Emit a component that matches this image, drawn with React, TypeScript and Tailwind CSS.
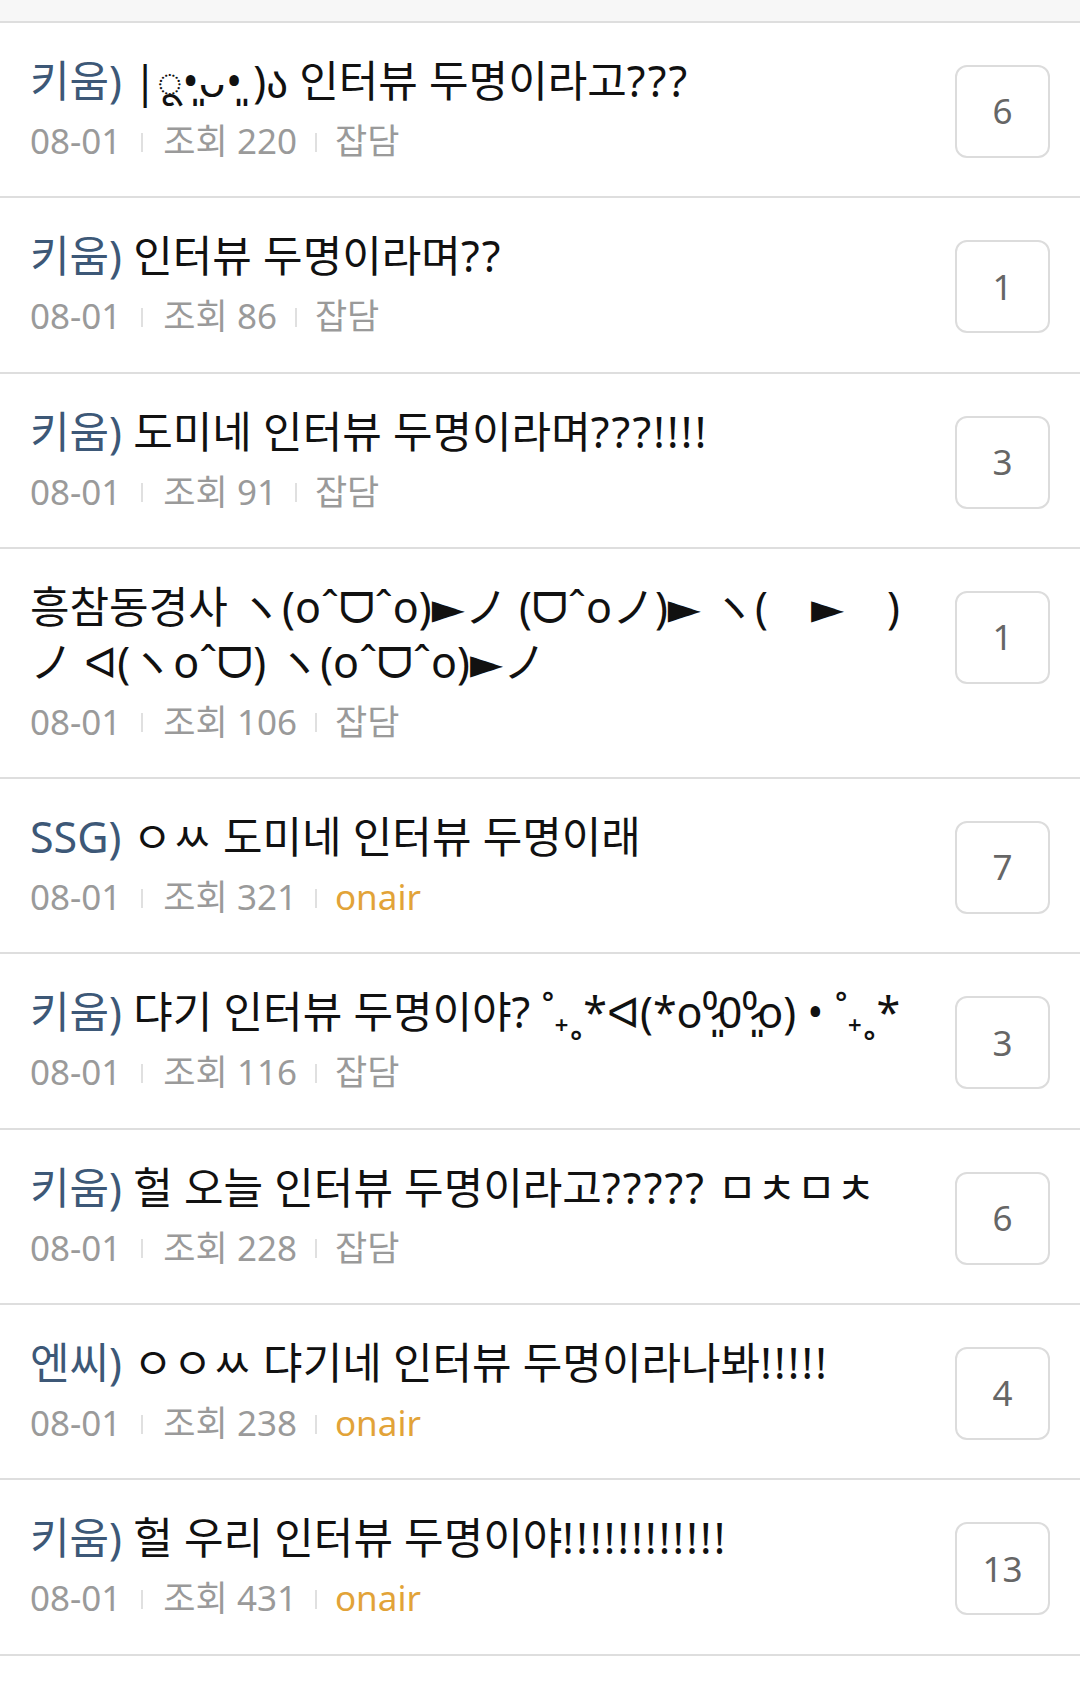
import React from 'react';

type Post = {
  team?: string;
  title: string;
  views: number;
  category: string;
  comments: number;
};

const posts: Post[] = [
  { team: '키움)', title: '|ू•͈ᴗ•͈ )ა 인터뷰 두명이라고???', views: 220, category: '잡담', comments: 6 },
  { team: '키움)', title: '인터뷰 두명이라며??', views: 86, category: '잡담', comments: 1 },
  { team: '키움)', title: '도미네 인터뷰 두명이라며???!!!!', views: 91, category: '잡담', comments: 3 },
  {
    title: '흥참동경사 ヽ(oˆᗜˆo)►ノ (ᗜˆoノ)► ヽ(\u3000►\u3000) ノ ᐊ(ヽoˆᗜ) ヽ(oˆᗜˆo)►ノ',
    views: 106,
    category: '잡담',
    comments: 1,
  },
  { team: 'SSG)', title: 'ㅇㅆ 도미네 인터뷰 두명이래', views: 321, category: 'onair', comments: 7 },
  { team: '키움)', title: '댜기 인터뷰 두명이야? ˚₊˳*ᐊ(*o⁰̷͈0⁰̷͈o) • ˚₊˳*', views: 116, category: '잡담', comments: 3 },
  { team: '키움)', title: '헐 오늘 인터뷰 두명이라고????? ㅁㅊㅁㅊ', views: 228, category: '잡담', comments: 6 },
  { team: '엔씨)', title: 'ㅇㅇㅆ 댜기네 인터뷰 두명이라나봐!!!!!', views: 238, category: 'onair', comments: 4 },
  { team: '키움)', title: '헐 우리 인터뷰 두명이야!!!!!!!!!!!!', views: 431, category: 'onair', comments: 13 },
];

// runs of ?/! are set a bit looser in the original
const renderTitle = (title: string) =>
  title.split(/([!?]{2,})/).map((part, i) =>
    /^[!?]{2,}$/.test(part) ? (
      <span key={i} className="tracking-[2.2px]">
        {part}
      </span>
    ) : (
      part
    ),
  );

const Divider = ({ last }: { last?: boolean }) => (
  <span className={`w-[2px] h-[19px] bg-[#e0e0e0] mt-[2px] ${last ? 'ml-[18px] mr-[18px]' : 'mx-[20px]'}`} />
);

const PostRow = ({ post }: { post: Post }) => (
  <div className="flex items-start border-b-2 border-[#dedede] pl-[30px] pr-[30px] pt-[30px] pb-[30.3px]">
    <div className="flex-1 min-w-0 pr-[28px]">
      <div className="text-[43px] leading-[55px] text-[#111]">
        {post.team && <span className="text-[#3d5877]">{post.team} </span>}
        {renderTitle(post.title)}
      </div>
      <div className="mt-[8px] flex items-center text-[35px] leading-[50px] text-[#9a9a9a] whitespace-nowrap">
        <span>08-01</span>
        <Divider />
        <span>조회 {post.views}</span>
        <Divider last />
        <span className={post.category === 'onair' ? 'text-[#e2a338]' : ''}>{post.category}</span>
      </div>
    </div>
    <div className="mt-[12px] w-[95px] h-[93px] shrink-0 flex items-center justify-center rounded-[12px] border-2 border-[#dcdcdc] text-[35px] text-[#666]">
      {post.comments}
    </div>
  </div>
);

export default function App() {
  return (
    <div
      className="w-[1080px] min-h-[1690px] bg-white"
      style={{ fontFamily: '"Noto Sans", "Noto Sans CJK KR", "DejaVu Sans", sans-serif' }}
    >
      <div className="h-[23px] bg-[#f7f7f7] border-b-2 border-[#dedede]" />
      {posts.map((post, i) => (
        <PostRow key={i} post={post} />
      ))}
    </div>
  );
}
